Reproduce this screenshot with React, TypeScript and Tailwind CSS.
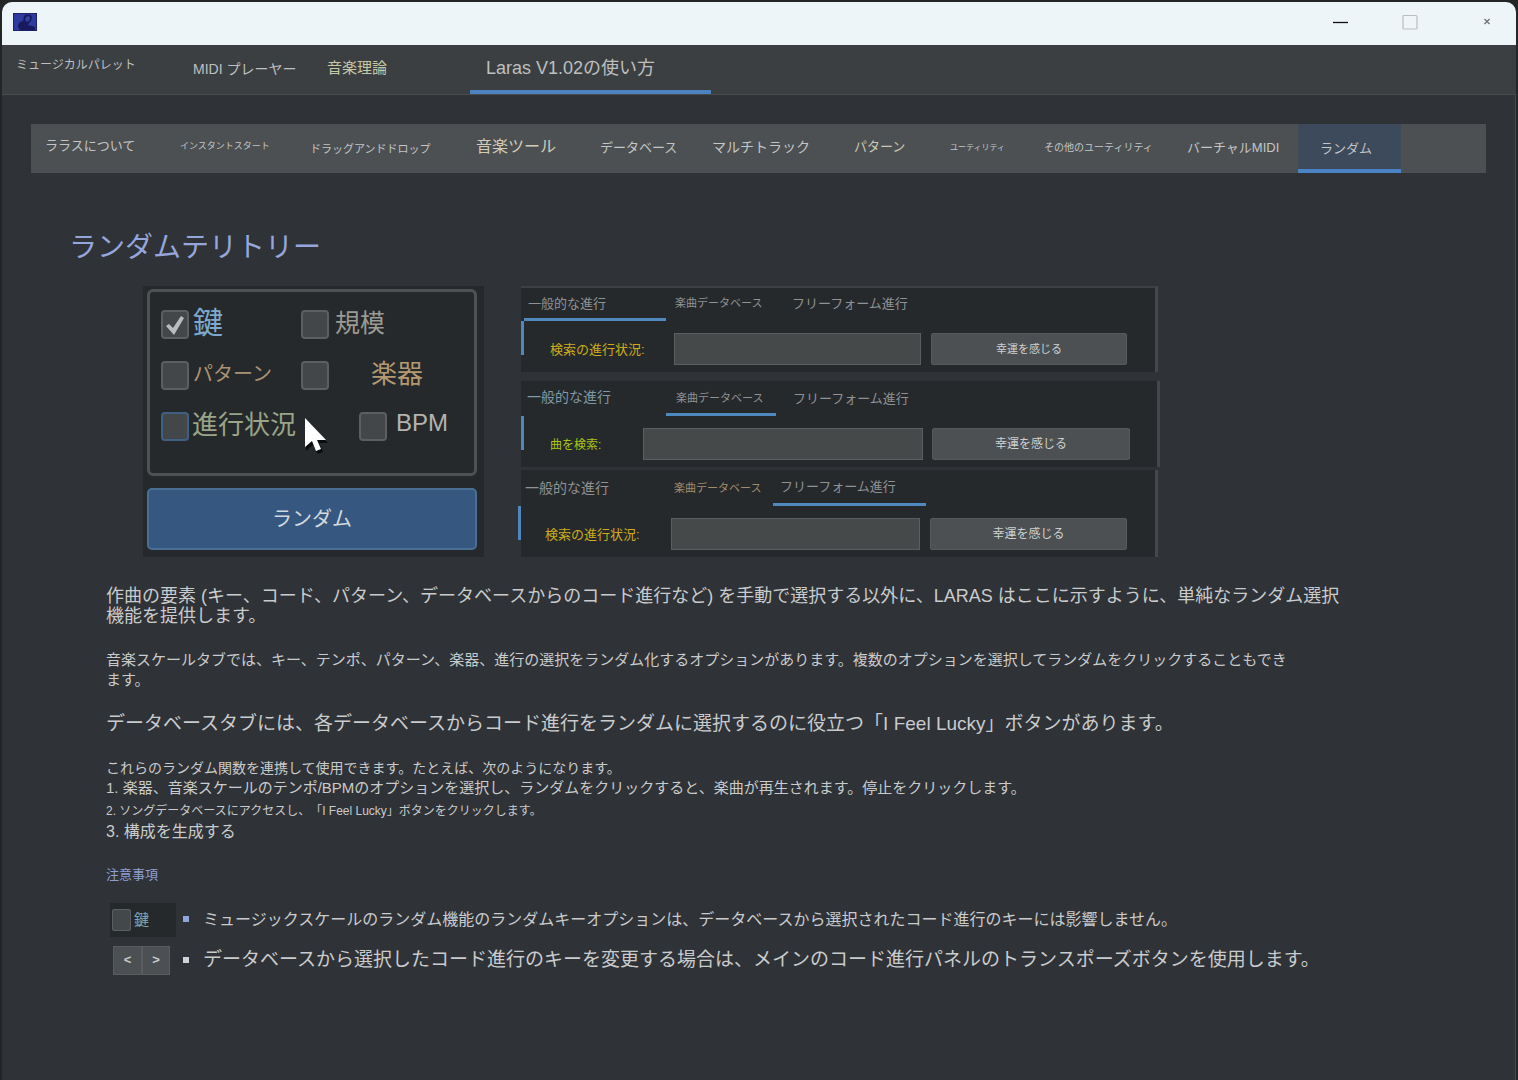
import React from 'react';
import { clsx } from 'clsx';

interface Tab {
    label: string;
    className: string;
    active?: boolean;
}

interface SearchPanelProps {
    id: string;
    tabs: Tab[];
    label: string;
    className: string;
    headerClass: string;
    markerClass: string;
    labelClass: string;
    inputClass: string;
    buttonClass: string;
}

const mainTabs: Tab[] = [
    { label: 'ミュージカルパレット', className: 'ml-[14px] w-[177px] pb-[6px] text-[12px]' },
    { label: 'MIDI プレーヤー', className: 'w-[134px] pt-[4px] text-[14px]' },
    { label: '音楽理論', className: 'w-[143px] pt-[1px] text-[15px] text-[#c6c8a4]' },
    { label: 'Laras V1.02の使い方', className: 'w-[241px] pt-[1px] pl-[16px] text-[18px]', active: true },
];

const helpTabs: Tab[] = [
    { label: 'ララスについて', className: 'ml-[14px] w-[135px] pb-[2px] text-[13px]' },
    { label: 'インスタントスタート', className: 'w-[130px] text-[9px]' },
    { label: 'ドラッグアンドドロップ', className: 'w-[166px] pt-[6px] text-[11px]' },
    { label: '音楽ツール', className: 'w-[124px] text-[16px] text-[#d0ccb8]' },
    { label: 'データベース', className: 'w-[112px] pt-[2px] text-[13px]' },
    { label: 'マルチトラック', className: 'w-[142px] pt-[2px] text-[14px]' },
    { label: 'パターン', className: 'w-[96px] text-[13px] text-[#c8c8b4]' },
    { label: 'ユーティリティ', className: 'w-[94px] pt-[2px] text-[8px]' },
    { label: 'その他のユーティリティ', className: 'w-[143px] pt-[2px] text-[10px]' },
    { label: 'バーチャルMIDI', className: 'w-[111px] pt-[2px] text-[13px]' },
    { label: 'ランダム', className: 'w-[103px] bg-[#3d4a5c] pt-[4px] pl-[22px] text-[13px]', active: true },
];

const CheckBox: React.FC<{
    id: string;
    label: string;
    className: string;
    boxClass?: string;
    checked?: boolean;
}> = ({ id, label, className, boxClass, checked }) => (
    <div className="flex h-[30px] items-center">
        <span className="relative flex">
            <input
                id={id}
                type="checkbox"
                defaultChecked={checked}
                className={clsx('peer h-[29px] w-[28px] appearance-none rounded-[4px] border-2 bg-[#43474a]', boxClass || 'border-[#5c5f61]')}
            />
            <svg viewBox="0 0 28 29" className="pointer-events-none absolute inset-0 hidden h-[29px] w-[28px] peer-checked:block">
                <path d="M5 16l3-2 4 4 8-12 3 2-10 17z" fill="#b9bbbc" />
            </svg>
        </span>
        <label htmlFor={id} className={clsx('pb-[2px] leading-[30px] whitespace-nowrap', className)}>{label}</label>
    </div>
);

const SearchPanel: React.FC<SearchPanelProps> = ({ id, tabs, label, className, headerClass, markerClass, labelClass, inputClass, buttonClass }) => (
    <section className={clsx('border-r-3 border-r-[#45484b] bg-[#26292c]', className)}>
        <div role="tablist" className={clsx('flex', headerClass)}>
            {tabs.map(tab => (
                <button
                    key={tab.label}
                    role="tab"
                    aria-selected={!!tab.active}
                    className={clsx('shrink-0 border-b-[3px] pt-[1px] text-left whitespace-nowrap', tab.active ? 'border-[#4f87bf]' : 'border-transparent', tab.className)}
                >
                    {tab.label}
                </button>
            ))}
        </div>
        <div className="flex items-start">
            <span className={clsx('h-[34px] w-[3px] shrink-0 bg-[#4f87bf]', markerClass)} />
            <label htmlFor={id} className={clsx('mt-[19px] shrink-0 leading-[20px] whitespace-nowrap', labelClass)}>{label}</label>
            <input id={id} type="text" className={clsx('mt-[12px] h-[32px] min-w-0 border border-[#5a5e60] bg-[#45494a] px-2 text-[13px]', inputClass)} />
            <button className={clsx('mt-[12px] h-[32px] rounded-[2px] border border-[#565a5c] bg-[#4c5052] text-[#ced0d1]', buttonClass)}>
                幸運を感じる
            </button>
        </div>
    </section>
);

const TitleBar: React.FC = () => (
    <header className="flex h-[43px] items-center rounded-t-[10px] bg-[#eef5f9] px-[11px] pb-[3px]">
        <svg viewBox="0 0 24 18" className="h-[18px] w-[24px]">
            <rect width="24" height="18" fill="#1d2167" />
            <rect x="1" y="1" width="22" height="16" fill="#2f3aa0" />
            <path d="M11 3c2-2 7-2 8 1 0 4-3 5-4 8l7 2v3H7l-2-3c0-3 1-5 5-6 1-1 0-3 1-5z" fill="#171a5c" />
            <path d="M13 4c2-1 4-1 4 1s-1 3-3 4l-2-2z" fill="#3440a6" />
        </svg>
        <div className="ml-auto flex items-center">
            <button aria-label="最小化" className="flex w-[69px]">
                <svg viewBox="0 0 16 16" className="h-[16px] w-[16px]"><path d="M0 8.5h15" stroke="#111" strokeWidth="1.3" /></svg>
            </button>
            <button aria-label="最大化" className="flex w-[77px]">
                <svg viewBox="0 0 16 16" className="h-[16px] w-[16px]"><rect x="1" y="1.5" width="14" height="13.5" rx="1" fill="none" stroke="#b9bdc0" strokeWidth="1.2" /></svg>
            </button>
            <button aria-label="閉じる" className="flex w-[26px]">
                <svg viewBox="0 0 16 16" className="h-[16px] w-[16px]"><path d="M5.500 5l5 5M10.500 5l-5 5" stroke="#6d7174" strokeWidth="1.3" /></svg>
            </button>
        </div>
    </header>
);

const RandomBox: React.FC = () => (
    <div className="h-[271px] w-[341px] shrink-0 bg-[#26292c] px-[4px] pt-[3px]">
        <fieldset className="relative flex h-[187px] w-[330px] flex-col gap-[21px] rounded-[6px] border-3 border-[#4e5153] pt-[17px] pl-[11px]">
            <div className="flex">
                <div className="w-[140px]">
                    <CheckBox id="key" label="鍵" className="pl-[4px] text-[30px] text-[#7ea9cf]" checked />
                </div>
                <CheckBox id="scale" label="規模" className="pl-[6px] text-[25px] text-[#9b9a93]" />
            </div>
            <div className="flex">
                <div className="w-[140px]">
                    <CheckBox id="pattern" label="パターン" className="pl-[4px] text-[20px] text-[#ab9272]" />
                </div>
                <CheckBox id="instrument" label="楽器" className="pl-[42px] text-[26px] text-[#b59a71]" />
            </div>
            <div className="flex">
                <div className="w-[198px]">
                    <CheckBox id="progress" label="進行状況" className="pl-[3px] text-[26px] text-[#99a586]" boxClass="border-[#3f6084]" />
                </div>
                <CheckBox id="bpm" label="BPM" className="pb-[6px] pl-[9px] text-[24px] text-[#b4b3b0]" />
            </div>
            <svg viewBox="0 0 26 38" className="pointer-events-none absolute top-[124px] left-[153px] h-[38px] w-[26px]">
                <path d="M3 5v30l7-6 5 9 5-2-4-9h9z" fill="#0b0c0d" />
                <path d="M2 2v29l7-6 4 10 5-2-4-9h9z" fill="#fff" />
            </svg>
        </fieldset>
        <button className="mt-[12px] h-[62px] w-[330px] rounded-[5px] border-2 border-[#4a6f94] bg-[#365880] text-[20px] text-[#d3d8de]">ランダム</button>
    </div>
);

const App: React.FC = () => {
    return (
        <div className="min-h-screen bg-[#232527] px-[2px] pt-[2px] font-['Liberation_Sans','Noto_Sans_CJK_JP',sans-serif] text-[#c9cbcd] [text-spacing-trim:space-all]">
            <div className="flex min-h-[calc(100vh-2px)] flex-col">
                <TitleBar />
                <nav className="flex h-[50px] border-b border-[#4a4d4f] bg-[#3c3f41] text-[#bdbfc0]">
                    {mainTabs.map(tab => (
                        <button
                            key={tab.label}
                            className={clsx('shrink-0 border-b-4 text-left whitespace-nowrap', tab.active ? 'border-[#4c82c0]' : 'border-transparent', tab.className)}
                        >
                            {tab.label}
                        </button>
                    ))}
                </nav>

                <main className="flex-1 border-r border-[#46494c] bg-[#2f3236] pt-[29px]">
                    <nav className="mx-[29px] flex h-[49px] bg-[#4c5052] text-[#c3c5c6]">
                        {helpTabs.map(tab => (
                            <button
                                key={tab.label}
                                className={clsx('shrink-0 border-b-4 text-left whitespace-nowrap', tab.active ? 'border-[#4a84c6]' : 'border-transparent', tab.className)}
                            >
                                {tab.label}
                            </button>
                        ))}
                    </nav>

                    <h1 className="mt-[55px] ml-[67px] text-[28px] leading-[40px] text-[#94a6dc]">ランダムテリトリー</h1>

                    <div className="mt-[18px] ml-[141px] flex gap-[34px]">
                        <RandomBox />
                        <div className="flex w-[642px] flex-col text-[#8f9294]">
                            <SearchPanel
                                id="search-common"
                                className="ml-[3px] h-[86px] w-[637px] border-t-2 border-t-[#3d4043]"
                                headerClass="h-[33px] pl-[3px]"
                                markerClass=""
                                tabs={[
                                    { label: '一般的な進行', className: 'w-[142px] pl-[4px] text-[13px]', active: true },
                                    { label: '楽曲データベース', className: 'w-[117px] pl-[9px] text-[11px]' },
                                    { label: 'フリーフォーム進行', className: 'w-[140px] pl-[9px] text-[13px]' },
                                ]}
                                label="検索の進行状況:"
                                labelClass="w-[124px] ml-[26px] text-[13px] text-[#ccac1c]"
                                inputClass="w-[247px]"
                                buttonClass="ml-[10px] w-[196px] text-[11px]"
                            />
                            <SearchPanel
                                id="search-song"
                                className="mt-[9px] ml-[3px] h-[86px] w-[639px]"
                                headerClass="h-[35px]"
                                markerClass=""
                                tabs={[
                                    { label: '一般的な進行', className: 'w-[145px] pl-[6px] text-[14px] text-[#7e99a8]' },
                                    { label: '楽曲データベース', className: 'w-[110px] pt-[3px] pl-[10px] text-[11px]', active: true },
                                    { label: 'フリーフォーム進行', className: 'w-[140px] pt-[4px] pl-[17px] text-[13px]' },
                                ]}
                                label="曲を検索:"
                                labelClass="w-[93px] ml-[26px] text-[12px] text-[#a9c416]"
                                inputClass="w-[280px]"
                                buttonClass="ml-[9px] w-[198px] text-[12px]"
                            />
                            <SearchPanel
                                id="search-free"
                                className="mt-[3px] ml-[3px] h-[87px] w-[637px]"
                                headerClass="h-[36px]"
                                markerClass="-ml-[3px]"
                                tabs={[
                                    { label: '一般的な進行', className: 'w-[143px] pt-[3px] pl-[4px] text-[14px]' },
                                    { label: '楽曲データベース', className: 'w-[109px] pt-[4px] pl-[10px] text-[11px] text-[#a38c6c]' },
                                    { label: 'フリーフォーム進行', className: 'w-[153px] pl-[7px] text-[13px]', active: true },
                                ]}
                                label="検索の進行状況:"
                                labelClass="w-[126px] ml-[24px] text-[13px] text-[#ccac1c]"
                                inputClass="w-[249px]"
                                buttonClass="ml-[10px] w-[197px] text-[12px]"
                            />
                        </div>
                    </div>

                    <article className="mt-[29px] ml-[104px] leading-[20px]">
                        <p className="text-[18px]">
                            作曲の要素 (キー、コード、パターン、データベースからのコード進行など) を手動で選択する以外に、LARAS はここに示すように、単純なランダム選択<br />
                            機能を提供します。
                        </p>
                        <p className="mt-6 text-[15px]">
                            音楽スケールタブでは、キー、テンポ、パターン、楽器、進行の選択をランダム化するオプションがあります。複数のオプションを選択してランダムをクリックすることもでき<br />
                            ます。
                        </p>
                        <p className="mt-6 text-[19px]">データベースタブには、各データベースからコード進行をランダムに選択するのに役立つ「I Feel Lucky」ボタンがあります。</p>
                        <p className="mt-[24px] text-[14px]">これらのランダム関数を連携して使用できます。たとえば、次のようになります。</p>
                        <ol>
                            <li className="text-[15px]">1. 楽器、音楽スケールのテンポ/BPMのオプションを選択し、ランダムをクリックすると、楽曲が再生されます。停止をクリックします。</li>
                            <li className="mt-[3px] text-[12px]">2. ソングデータベースにアクセスし、「I Feel Lucky」ボタンをクリックします。</li>
                            <li className="mt-px text-[16px]">3. 構成を生成する</li>
                        </ol>
                        <h2 className="mt-[23px] text-[13px] text-[#8e9fd2]">注意事項</h2>
                    </article>

                    <ul className="mt-[18px] ml-[108px] flex flex-col gap-[6px]">
                        <li className="flex items-center">
                            <div className="flex h-[34px] w-[66px] items-center bg-[#26292c] pl-[2px]">
                                <input id="note-key" type="checkbox" className="h-[22px] w-[19px] appearance-none rounded-[2px] border border-[#5c5f61] bg-[#43494a]" />
                                <label htmlFor="note-key" className="pl-[3px] text-[15px] text-[#7fa3ae]">鍵</label>
                            </div>
                            <span className="mb-[3px] ml-[7px] h-[6px] w-[6px] bg-[#8fa5dc]" />
                            <p className="ml-[14px] text-[16px] whitespace-nowrap">ミュージックスケールのランダム機能のランダムキーオプションは、データベースから選択されたコード進行のキーには影響しません。</p>
                        </li>
                        <li className="flex items-center">
                            <div className="flex h-[34px] w-[66px] items-center pl-[3px]">
                                <button className="h-[29px] w-[29px] border border-[#595d5f] bg-[#4c5052] text-[13px] font-bold">&lt;</button>
                                <button className="h-[29px] w-[28px] border border-[#595d5f] bg-[#4c5052] text-[13px] font-bold">&gt;</button>
                            </div>
                            <span className="ml-[7px] h-[6px] w-[6px] bg-[#d0d2d3]" />
                            <p className="ml-[14px] text-[19px] whitespace-nowrap">データベースから選択したコード進行のキーを変更する場合は、メインのコード進行パネルのトランスポーズボタンを使用します。</p>
                        </li>
                    </ul>
                </main>
            </div>
        </div>
    );
};

export default App;
